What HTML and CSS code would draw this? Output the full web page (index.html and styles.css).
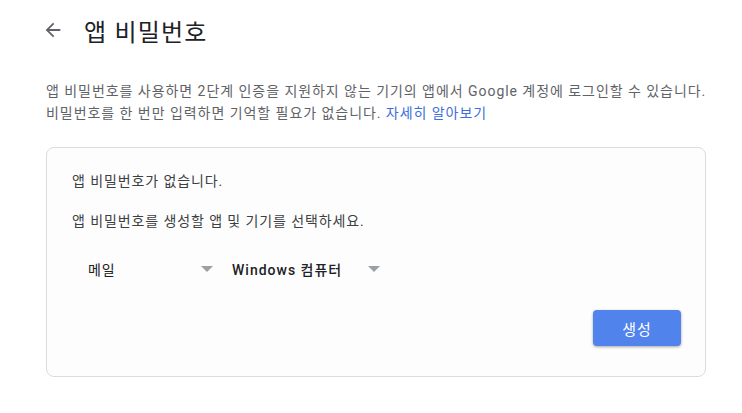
FILE: index.html
```html
<!DOCTYPE html>
<html lang="ko">
<head>
<meta charset="utf-8">
<link rel="stylesheet" href="styles.css">
</head>
<body>
<div class="page">
  <header class="head">
    <svg class="back" width="22" height="22" viewBox="0 0 24 24"><path d="M20 11H7.83l5.59-5.59L12 4l-8 8 8 8 1.41-1.41L7.83 13H20v-2z" fill="#5f6368"/></svg>
    <h1 class="title">앱 비밀번호</h1>
  </header>
  <p class="desc">앱 비밀번호를 사용하면 2단계 인증을 지원하지 않는 기기의 앱에서 Google 계정에 로그인할 수 있습니다.<br>비밀번호를 한 번만 입력하면 기억할 필요가 없습니다. <a class="link">자세히 알아보기</a></p>
  <section class="card">
    <p class="line">앱 비밀번호가 없습니다.</p>
    <p class="line second">앱 비밀번호를 생성할 앱 및 기기를 선택하세요.</p>
    <div class="selects">
      <div class="select s1"><span>메일</span><i class="caret"></i></div>
      <div class="select s2"><span>Windows 컴퓨터</span><i class="caret"></i></div>
    </div>
    <div class="actions"><button class="btn">생성</button></div>
  </section>
</div>
</body>
</html>
```
FILE: styles.css
```css
* { box-sizing: border-box; }
html, body { margin: 0; background: #fff; }
body { font-family: Roboto, "Noto Sans CJK KR", sans-serif; color: #202124; }
.page { padding: 0 36px 0 46px; }
.head { display: flex; align-items: center; height: 60px; }
.back { margin-left: -4px; margin-right: 20px; }
.title { margin: 0; font-size: 24px; font-weight: 400; color: #202124; letter-spacing: 1.2px; }
.desc { margin: 20px 0 0; font-size: 14px; line-height: 22px; color: #5f6368; letter-spacing: 0.95px; white-space: nowrap; }
.link { color: #3b6fdb; }
.card { margin-top: 23px; border: 1px solid #dadce0; border-radius: 8px; width: 660px; height: 230px; padding: 22px 24px 0 25px; background: #fdfdfd; }
.line { margin: 0; font-size: 14px; line-height: 22px; color: #3c4043; letter-spacing: 0.9px; }
.second { margin-top: 18px; }
.selects { display: flex; margin-top: 23px; height: 28px; align-items: center; }
.select { display: flex; align-items: center; justify-content: space-between; font-size: 14px; color: #202124; }
.s1 { width: 141px; padding-left: 16px; letter-spacing: 0.9px; }
.s2 { width: 148px; margin-left: 19px; font-weight: 500; letter-spacing: 1px; }
.caret { width: 0; height: 0; border-left: 6px solid transparent; border-right: 6px solid transparent; border-top: 6px solid #9aa0a6; }
.actions { display: flex; justify-content: flex-end; margin-top: 27px; }
.btn { width: 88px; height: 36px; border: none; border-radius: 4px; background: #5083ec; color: #fff; font-family: inherit; font-size: 15px; letter-spacing: 1px; box-shadow: 0 1px 3px rgba(0,0,0,0.35); }
```
